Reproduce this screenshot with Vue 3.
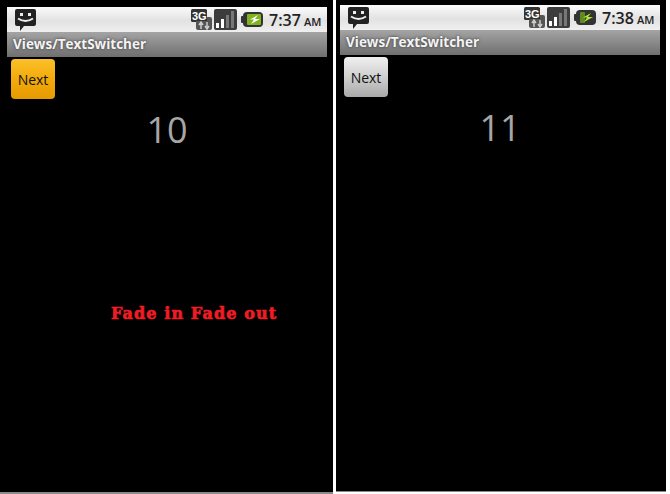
<script setup>
const phones = [
  { id: 'left', time: '7:37', count: '10', pressed: true, fade: 'Fade in Fade out' },
  { id: 'right', time: '7:38', count: '11', pressed: false, fade: '' }
];
</script>

<template>
  <div class="page">
    <div v-for="p in phones" :key="p.id" class="phone" :class="p.id">
      <div class="screen">
        <div class="status">
          <svg class="msg" width="24" height="24" viewBox="0 0 24 24">
            <path d="M3 1h17a2 2 0 0 1 2 2v13a2 2 0 0 1-2 2H10l-4 5v-5H3a2 2 0 0 1-2-2V3a2 2 0 0 1 2-2z" fill="#222" />
            <rect x="6" y="5" width="3" height="3" fill="#eee" />
            <rect x="14" y="5" width="3" height="3" fill="#eee" />
            <path d="M4 10.500q7.500 5 15 0" fill="none" stroke="#eee" stroke-width="2" />
          </svg>
          <div class="icons">
            <svg width="21" height="21" viewBox="0 0 21 21">
              <rect x="0" y="0" width="16" height="13" rx="1.500" fill="#333" />
              <rect x="5" y="8" width="16" height="13" rx="2" fill="#555" />
              <rect x="1" y="1" width="15" height="11" fill="#333" />
              <text x="1" y="10.500" class="g3">3G</text>
              <path d="M10 20v-6M8 16l2-3 2 3M16 13v6M14 17l2 3 2-3" fill="none" stroke="#ccc" stroke-width="1.500" />
            </svg>
            <svg width="23" height="21" viewBox="0 0 23 21">
              <rect width="23" height="21" rx="2" fill="#3c3c3c" />
              <rect x="2" y="14" width="3" height="5" fill="#fff" />
              <rect x="7" y="10" width="3" height="9" fill="#fff" />
              <rect x="12" y="6" width="3" height="13" fill="#777" />
              <rect x="17" y="2" width="3" height="17" fill="#777" />
            </svg>
            <svg class="batt" width="22" height="15" viewBox="0 0 22 15">
              <rect x="0" y="4" width="3" height="7" rx="1" fill="#333" />
              <rect x="2" y="0" width="20" height="15" rx="4" fill="#333" />
              <rect x="6" y="2" :width="p.pressed ? 14 : 5" height="11" rx="1" :fill="p.pressed ? '#7fb320' : '#5f8a22'" />
              <path d="M17 3l-8 4.500h4l-3 4.500 9-5h-5z" :fill="p.pressed ? '#fff' : '#b4e62a'" />
            </svg>
          </div>
          <div class="clock">{{ p.time }} <small>AM</small></div>
        </div>
        <div class="title">Views/TextSwitcher</div>
        <div class="body">
          <button class="next" :class="{ pressed: p.pressed }">Next</button>
          <div class="count">{{ p.count }}</div>
          <div v-if="p.fade" class="fade">{{ p.fade }}</div>
        </div>
      </div>
    </div>
  </div>
</template>

<style>
html, body {
  background: #fff;
}
</style>

<style scoped>
.page {
  display: flex;
  gap: 3px;
  width: 670px;
  height: 494px;
  align-items: flex-start;
  overflow: hidden;
  font-family: "Open Sans", "Noto Sans", sans-serif;
}

.phone {
  background: #000;
  box-sizing: border-box;
  overflow: hidden;
}

.left {
  width: 333px;
  height: 494px;
  padding: 7px 0 0 7px;
  border-bottom: 2px solid #8a8a8a;
}

.right {
  width: 330px;
  height: 492px;
  padding: 5px 0 0 4px;
  border-bottom: 1px solid #8a8a8a;
}

.screen {
  width: 320px;
}

.status {
  display: flex;
  align-items: center;
  height: 25px;
  background: linear-gradient(#fbfbfb, #e2e2e2 55%, #efefef);
}

.msg {
  margin-left: 7px;
}

.icons {
  display: flex;
  align-items: center;
  gap: 2px;
  margin-left: auto;
}

.g3 {
  font: 700 11px "Liberation Sans", sans-serif;
  fill: #fff;
}

.batt {
  margin-left: 2px;
}

.clock {
  width: 58px;
  margin-left: 6px;
  font-size: 16px;
  font-weight: 600;
  word-spacing: -1px;
  color: #222;
  white-space: nowrap;
}

.clock small {
  font-size: 11px;
}

.title {
  height: 25px;
  padding-left: 6px;
  line-height: 24px;
  font-size: 13.500px;
  font-weight: 700;
  color: #f4f4f4;
  text-shadow: 0 0 3px #333;
  background: linear-gradient(#a4a4a4, #6f6f6f);
}

.body {
  padding: 2px 0 0 4px;
}

.next {
  display: block;
  width: 44px;
  height: 40px;
  padding: 0;
  border: none;
  border-radius: 4px;
  font: 14px "Open Sans", "Noto Sans", sans-serif;
  color: #111;
  background: linear-gradient(#f0f0f0, #cfcfcf 50%, #a9a9a9);
}

.next.pressed {
  background: linear-gradient(#fbc02a, #f3ab0c 50%, #e59a00);
}

.count {
  margin: 7px 0 0 -4px;
  text-align: center;
  font-size: 36px;
  line-height: 48px;
  color: #a6a6a6;
}

.fade {
  margin: 150px 0 0 100px;
  font: 700 16px "DejaVu Serif", serif;
  letter-spacing: 1.100px;
  color: #ef1c24;
  white-space: nowrap;
  -webkit-text-stroke: 0.7px #ef1c24;
}
</style>
